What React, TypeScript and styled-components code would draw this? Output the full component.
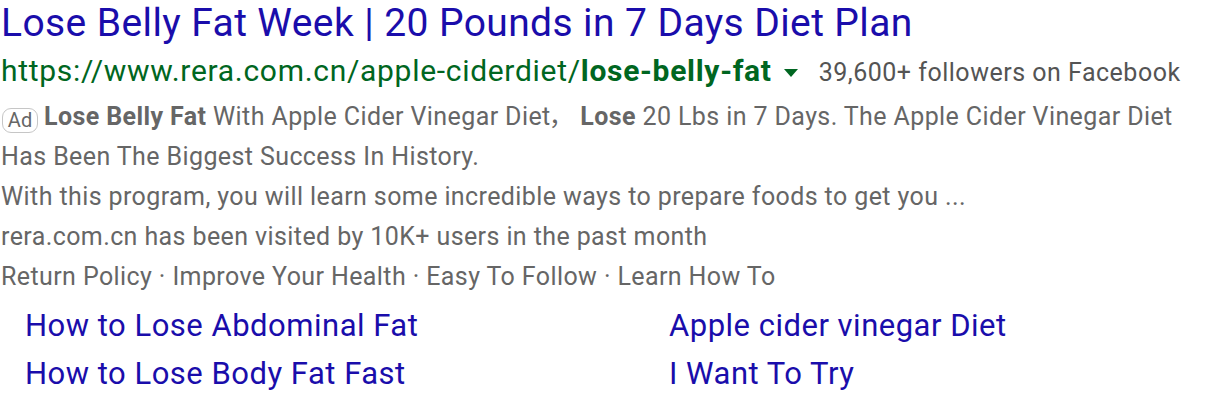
import React from "react";
import styled, { createGlobalStyle } from "styled-components";

const Global = createGlobalStyle`
  html, body { margin: 0; padding: 0; background: #fff; }
  body { font-family: Roboto, "Liberation Sans", "Noto Sans CJK SC", Arial, sans-serif; }
`;

const Wrap = styled.div`
  display: flex;
  flex-direction: column;
  padding: 0 0 0 1px;
`;

const Title = styled.a`
  display: block;
  font-size: 39px;
  line-height: 47px;
  letter-spacing: 0.4px;
  color: #1a0dab;
  text-decoration: none;
  white-space: nowrap;
`;

const UrlRow = styled.div`
  height: 50px;
  line-height: 48px;
  white-space: nowrap;
`;

const Url = styled.span`
  font-size: 30px;
  letter-spacing: 0.7px;
  color: #006621;
  b { font-weight: 700; }
`;

const Caret = styled.span`
  display: inline-block;
  width: 0;
  height: 0;
  margin: 0 21px 0 12px;
  border-left: 7px solid transparent;
  border-right: 7px solid transparent;
  border-top: 8px solid #006621;
  vertical-align: 4px;
`;

const Followers = styled.span`
  font-size: 25px;
  letter-spacing: 0.5px;
  color: #545454;
`;

const Line = styled.div`
  height: 40px;
  font-size: 25px;
  line-height: 40px;
  letter-spacing: 0.4px;
  color: #666;
  white-space: nowrap;
  b { font-weight: 700; color: #666; }
`;

const Comma = styled.span`
  font-family: "Noto Sans CJK SC", sans-serif;
  letter-spacing: 0;
  line-height: 0;
  margin-left: -2px;
`;

const AdBadge = styled.span`
  display: inline-flex;
  align-items: center;
  justify-content: center;
  box-sizing: border-box;
  height: 25px;
  width: 36px;
  margin: 0 6px 0 1px;
  border: 1px solid #c6c6c6;
  border-radius: 9px;
  font-size: 20px;
  letter-spacing: 0;
  line-height: 23px;
  color: #666;
  vertical-align: -2px;
`;

const Sitelinks = styled.div`
  display: grid;
  grid-template-columns: 644px auto;
  padding: 5px 0 0 24px;
`;

const Sitelink = styled.a`
  font-size: 31px;
  line-height: 48px;
  letter-spacing: 0.5px;
  color: #1a0dab;
  text-decoration: none;
  white-space: nowrap;
`;

export default function App() {
  return (
    <>
      <Global />
      <Wrap>
        <Title href="#">Lose Belly Fat Week | 20 Pounds in 7 Days Diet Plan</Title>
        <UrlRow>
          <Url>
            https://www.rera.com.cn/apple-ciderdiet/<b>lose-belly-fat</b>
          </Url>
          <Caret />
          <Followers>39,600+ followers on Facebook</Followers>
        </UrlRow>
        <Line>
          <AdBadge>Ad</AdBadge>
          <b>Lose Belly Fat</b> With Apple Cider Vinegar Diet<Comma>，</Comma> <b>Lose</b> 20 Lbs in 7 Days. The Apple Cider Vinegar Diet
        </Line>
        <Line>Has Been The Biggest Success In History.</Line>
        <Line>With this program, you will learn some incredible ways to prepare foods to get you ...</Line>
        <Line>rera.com.cn has been visited by 10K+ users in the past month</Line>
        <Line>Return Policy · Improve Your Health · Easy To Follow · Learn How To</Line>
        <Sitelinks>
          <Sitelink href="#">How to Lose Abdominal Fat</Sitelink>
          <Sitelink href="#">Apple cider vinegar Diet</Sitelink>
          <Sitelink href="#">How to Lose Body Fat Fast</Sitelink>
          <Sitelink href="#">I Want To Try</Sitelink>
        </Sitelinks>
      </Wrap>
    </>
  );
}
